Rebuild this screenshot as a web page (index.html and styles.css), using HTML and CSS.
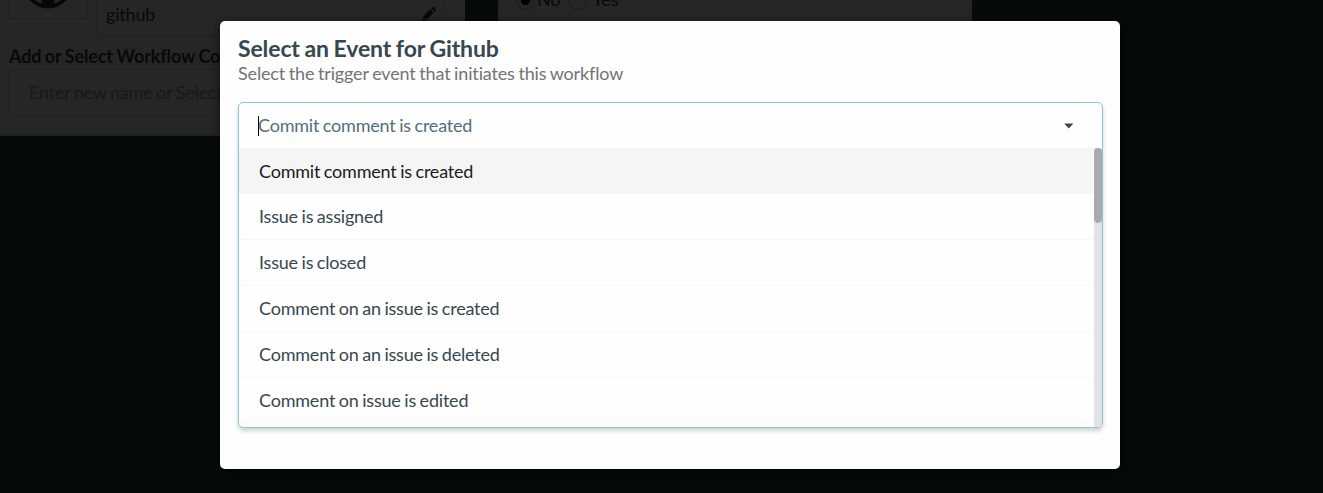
FILE: index.html
```html
<!DOCTYPE html>
<html lang="en">
<head>
<meta charset="utf-8">
<title>Select an Event for Github</title>
<link rel="stylesheet" href="styles.css">
</head>
<body>
<main class="workspace">
  <section class="panel panel-source">
    <div class="source-row">
      <div class="source-logo">
        <svg width="50" height="50" viewBox="0 0 50 50"><circle cx="25" cy="25" r="22.5" fill="none" stroke="#05090c" stroke-width="4"/><path d="M18.5 49V37Q25 32 31.5 37V49Z" fill="#05090c"/></svg>
      </div>
      <div class="source-name"><span>github</span>
        <svg class="pencil" width="16" height="16" viewBox="0 0 16 16"><path d="M1 15l1-4.200 7.500-7.500 3.200 3.200L5.200 14zM10.300 2.500l1.500-1.500q.6-.5 1.200 0l2 2q.5.600 0 1.200l-1.500 1.500z" fill="#06090b"/><path d="M2.300 11.500l2.200 2.200" stroke="#262626"/></svg>
      </div>
    </div>
    <div class="field-label">Add or Select Workflow Co</div>
    <div class="field-input">Enter new name or Select</div>
  </section>
  <section class="panel panel-options">
    <span class="radio radio-on"></span><span class="radio-label">No</span>
    <span class="radio"></span><span class="radio-label">Yes</span>
  </section>
</main>
<div class="modal" role="dialog">
  <h1 class="modal-title">Select an Event for Github</h1>
  <p class="modal-subtitle">Select the trigger event that initiates this workflow</p>
  <div class="dropdown">
    <div class="dropdown-value"><span class="caret"></span><span class="value-text">Commit comment is created</span>
      <svg class="arrow" width="10" height="6" viewBox="0 0 10 6"><path d="M.2.500h9.200L4.800 5.500z" fill="#37474f"/></svg>
    </div>
    <div class="menu">
      <ul class="options">
        <li class="option selected">Commit comment is created</li>
        <li class="option">Issue is assigned</li>
        <li class="option">Issue is closed</li>
        <li class="option">Comment on an issue is created</li>
        <li class="option">Comment on an issue is deleted</li>
        <li class="option">Comment on issue is edited</li>
      </ul>
      <div class="scroll-track"><div class="scroll-thumb"></div></div>
    </div>
  </div>
</div>
</body>
</html>
```
FILE: styles.css
```css
* { box-sizing: border-box; }
body { margin: 0; height: 493px; overflow: hidden; position: relative; background: #060a0b; font-family: Lato, sans-serif; font-size: 18px; letter-spacing: -.2px; word-spacing: -.8px; color: #37474f; }
.workspace { display: flex; gap: 33px; align-items: flex-start; }
.panel { background: #262626; height: 136px; border-bottom: 2px solid #1f2020; overflow: hidden; }
.panel-source { width: 465px; padding: 0 18px 0 8px; }
.source-row { display: flex; gap: 8px; height: 37px; }
.source-logo { width: 80px; height: 19px; border: 1px solid #202020; border-top: 0; display: flex; justify-content: center; align-items: flex-end; overflow: hidden; padding-bottom: 9px; }
.source-logo svg { flex: none; }
.source-name { width: 350px; height: 37px; border: 1px solid #202020; border-top: 0; border-radius: 0 0 4px 4px; display: flex; justify-content: space-between; padding: 3px 8px 0 9px; line-height: 22px; color: #07090a; }
.pencil { margin-top: 3px; }
.field-label { font-weight: 700; line-height: 22px; letter-spacing: -.12px; margin-top: 8px; padding-left: 1px; color: #07090a; white-space: nowrap; }
.field-input { margin-top: 2px; height: 48px; border: 1px solid #202020; border-radius: 4px; padding: 0 20px; line-height: 44px; color: #171819; white-space: nowrap; }
.panel-options { width: 474px; display: flex; padding-left: 18px; }
.radio { width: 19px; height: 19px; margin-top: -9px; border: 1px solid #1b1b1b; border-radius: 50%; flex: none; }
.radio-on { background: radial-gradient(circle, #000 4px, transparent 5px); }
.radio-label { line-height: 20px; margin: -11px 8px 0 2px; color: #07090a; }
.radio:not(.radio-on) + .radio-label { margin-left: 5px; }
.modal { position: absolute; left: 220px; top: 21px; width: 900px; height: 448px; border-radius: 5px; background: #fefefe; padding: 14px 17px 0 18px; box-shadow: 1px 3px 10px 2px rgba(0,0,0,.5); }
.modal-title { margin: 0; font-size: 23px; line-height: 27px; font-weight: 700; letter-spacing: -.12px; }
.modal-subtitle { margin: 0; line-height: 22px; letter-spacing: -.15px; color: #737373; }
.dropdown { margin-top: 18px; height: 326px; border: 1px solid #8bc7db; border-radius: 5px; box-shadow: 0 3px 4px rgba(34,36,38,.2); overflow: hidden; }
.dropdown-value { height: 45.400px; display: flex; align-items: center; padding: 0 29px 0 19px; color: #546e7a; }
.caret { width: 1px; height: 20px; background: #000; margin-right: -1px; }
.value-text { flex: 1; margin-top: -2px; }
.arrow { position: relative; left: .5px; }
.menu { display: flex; height: 279px; }
.options { list-style: none; margin: 0; padding: 0; flex: 1; }
.option { height: 45.800px; line-height: 45.200px; padding-left: 20px; border-bottom: 1px solid #f5f7f7; }
.selected { height: 46px; line-height: 46.800px; background: #f5f5f5; border-color: #f5f5f5; color: #1b1b1b; }
.scroll-track { width: 8px; background: #e3e3e3; margin-left: 1px; }
.scroll-thumb { height: 75px; border-radius: 4px; background: #aaa; }
```
